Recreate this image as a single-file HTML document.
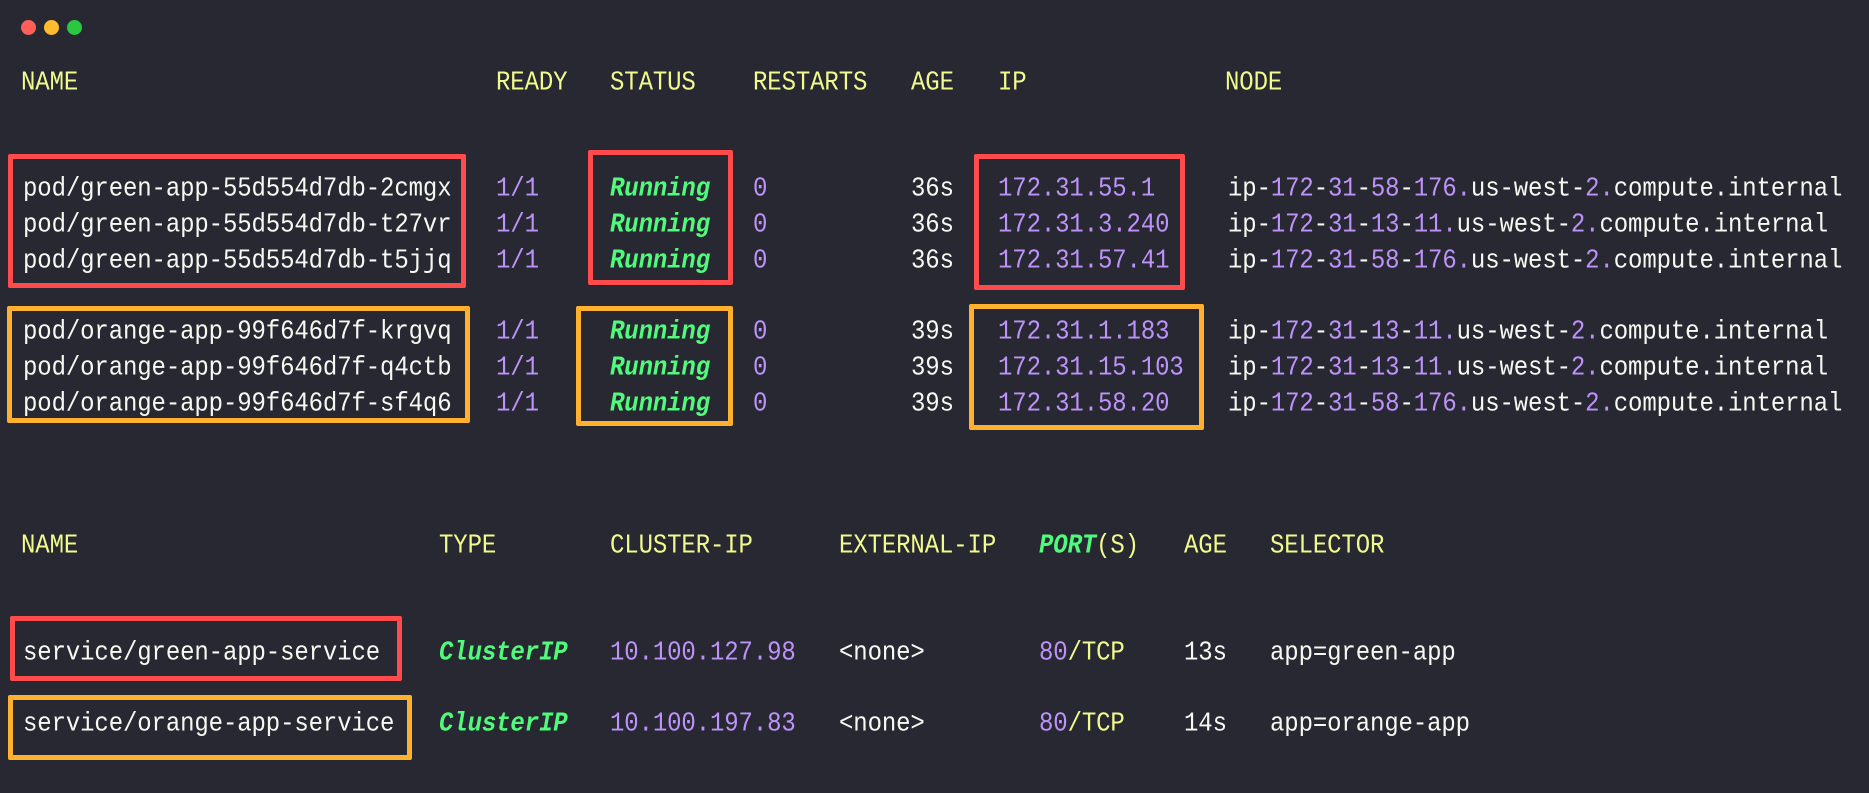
<!DOCTYPE html>
<html><head><meta charset="utf-8"><style>
body{margin:0;width:1869px;height:793px;background:#282833;overflow:hidden;position:relative;font-family:"Liberation Mono","DejaVu Sans Mono",monospace;font-size:24px;color:#f8f8f2;letter-spacing:-0.12px}
.t{position:absolute;white-space:pre;line-height:30px;transform:translateY(-12px) scaleY(1.1);transform-origin:0 50%}
.y{color:#f1fa8c}.p{color:#bd93f9}.g{color:#50fa7b;font-weight:bold;font-style:italic}
.b{position:absolute;box-sizing:border-box;border:5px solid #ff4b4b;border-radius:2px}
.o{border-color:#ffb02e}
.d{position:absolute;top:20px;width:15px;height:15px;border-radius:50%}
</style></head><body>
<div class="d" style="left:21px;background:#ff5f57"></div>
<div class="d" style="left:44px;background:#febc2e"></div>
<div class="d" style="left:67px;background:#28c840"></div>

<div class="b" style="left:8px;top:154px;width:458px;height:134px"></div>
<div class="b" style="left:588px;top:150px;width:145px;height:135px"></div>
<div class="b" style="left:974px;top:154px;width:211px;height:136px"></div>
<div class="b o" style="left:7px;top:306px;width:463px;height:117px"></div>
<div class="b o" style="left:576px;top:306px;width:157px;height:120px"></div>
<div class="b o" style="left:969px;top:304px;width:235px;height:126px"></div>
<div class="b" style="left:10px;top:616px;width:392px;height:65px"></div>
<div class="b o" style="left:8px;top:695px;width:404px;height:65px"></div>

<div class="t y" style="left:21px;top:81px">NAME</div>
<div class="t y" style="left:496px;top:81px">READY</div>
<div class="t y" style="left:610px;top:81px">STATUS</div>
<div class="t y" style="left:753px;top:81px">RESTARTS</div>
<div class="t y" style="left:911px;top:81px">AGE</div>
<div class="t y" style="left:998px;top:81px">IP</div>
<div class="t y" style="left:1225px;top:81px">NODE</div>

<div class="t" style="left:23px;top:187px">pod/green-app-55d554d7db-2cmgx</div>
<div class="t" style="left:23px;top:223px">pod/green-app-55d554d7db-t27vr</div>
<div class="t" style="left:23px;top:259px">pod/green-app-55d554d7db-t5jjq</div>
<div class="t" style="left:23px;top:330px">pod/orange-app-99f646d7f-krgvq</div>
<div class="t" style="left:23px;top:366px">pod/orange-app-99f646d7f-q4ctb</div>
<div class="t" style="left:23px;top:402px">pod/orange-app-99f646d7f-sf4q6</div>

<div class="t p" style="left:496px;top:187px">1/1</div><div class="t p" style="left:496px;top:223px">1/1</div><div class="t p" style="left:496px;top:259px">1/1</div>
<div class="t p" style="left:496px;top:330px">1/1</div><div class="t p" style="left:496px;top:366px">1/1</div><div class="t p" style="left:496px;top:402px">1/1</div>

<div class="t g" style="left:610px;top:187px">Running</div><div class="t g" style="left:610px;top:223px">Running</div><div class="t g" style="left:610px;top:259px">Running</div>
<div class="t g" style="left:610px;top:330px">Running</div><div class="t g" style="left:610px;top:366px">Running</div><div class="t g" style="left:610px;top:402px">Running</div>

<div class="t p" style="left:753px;top:187px">0</div><div class="t p" style="left:753px;top:223px">0</div><div class="t p" style="left:753px;top:259px">0</div>
<div class="t p" style="left:753px;top:330px">0</div><div class="t p" style="left:753px;top:366px">0</div><div class="t p" style="left:753px;top:402px">0</div>

<div class="t" style="left:911px;top:187px">36s</div><div class="t" style="left:911px;top:223px">36s</div><div class="t" style="left:911px;top:259px">36s</div>
<div class="t" style="left:911px;top:330px">39s</div><div class="t" style="left:911px;top:366px">39s</div><div class="t" style="left:911px;top:402px">39s</div>

<div class="t p" style="left:998px;top:187px">172.31.55.1</div>
<div class="t p" style="left:998px;top:223px">172.31.3.240</div>
<div class="t p" style="left:998px;top:259px">172.31.57.41</div>
<div class="t p" style="left:998px;top:330px">172.31.1.183</div>
<div class="t p" style="left:998px;top:366px">172.31.15.103</div>
<div class="t p" style="left:998px;top:402px">172.31.58.20</div>

<div class="t" style="left:1228px;top:187px">ip-<span class="p">172</span>-<span class="p">31</span>-<span class="p">58</span>-<span class="p">176.</span>us-west-<span class="p">2.</span>compute.internal</div>
<div class="t" style="left:1228px;top:223px">ip-<span class="p">172</span>-<span class="p">31</span>-<span class="p">13</span>-<span class="p">11.</span>us-west-<span class="p">2.</span>compute.internal</div>
<div class="t" style="left:1228px;top:259px">ip-<span class="p">172</span>-<span class="p">31</span>-<span class="p">58</span>-<span class="p">176.</span>us-west-<span class="p">2.</span>compute.internal</div>
<div class="t" style="left:1228px;top:330px">ip-<span class="p">172</span>-<span class="p">31</span>-<span class="p">13</span>-<span class="p">11.</span>us-west-<span class="p">2.</span>compute.internal</div>
<div class="t" style="left:1228px;top:366px">ip-<span class="p">172</span>-<span class="p">31</span>-<span class="p">13</span>-<span class="p">11.</span>us-west-<span class="p">2.</span>compute.internal</div>
<div class="t" style="left:1228px;top:402px">ip-<span class="p">172</span>-<span class="p">31</span>-<span class="p">58</span>-<span class="p">176.</span>us-west-<span class="p">2.</span>compute.internal</div>

<div class="t y" style="left:21px;top:544px">NAME</div>
<div class="t y" style="left:439px;top:544px">TYPE</div>
<div class="t y" style="left:610px;top:544px">CLUSTER-IP</div>
<div class="t y" style="left:839px;top:544px">EXTERNAL-IP</div>
<div class="t y" style="left:1039px;top:544px"><span class="g">PORT</span>(S)</div>
<div class="t y" style="left:1184px;top:544px">AGE</div>
<div class="t y" style="left:1270px;top:544px">SELECTOR</div>

<div class="t" style="left:23px;top:651px">service/green-app-service</div>
<div class="t" style="left:23px;top:722px">service/orange-app-service</div>
<div class="t g" style="left:439px;top:651px">ClusterIP</div>
<div class="t g" style="left:439px;top:722px">ClusterIP</div>
<div class="t p" style="left:610px;top:651px">10.100.127.98</div>
<div class="t p" style="left:610px;top:722px">10.100.197.83</div>
<div class="t" style="left:839px;top:651px">&lt;none&gt;</div>
<div class="t" style="left:839px;top:722px">&lt;none&gt;</div>
<div class="t y" style="left:1039px;top:651px"><span class="p">80</span>/TCP</div>
<div class="t y" style="left:1039px;top:722px"><span class="p">80</span>/TCP</div>
<div class="t" style="left:1184px;top:651px">13s</div>
<div class="t" style="left:1184px;top:722px">14s</div>
<div class="t" style="left:1270px;top:651px">app=green-app</div>
<div class="t" style="left:1270px;top:722px">app=orange-app</div>
</body></html>
